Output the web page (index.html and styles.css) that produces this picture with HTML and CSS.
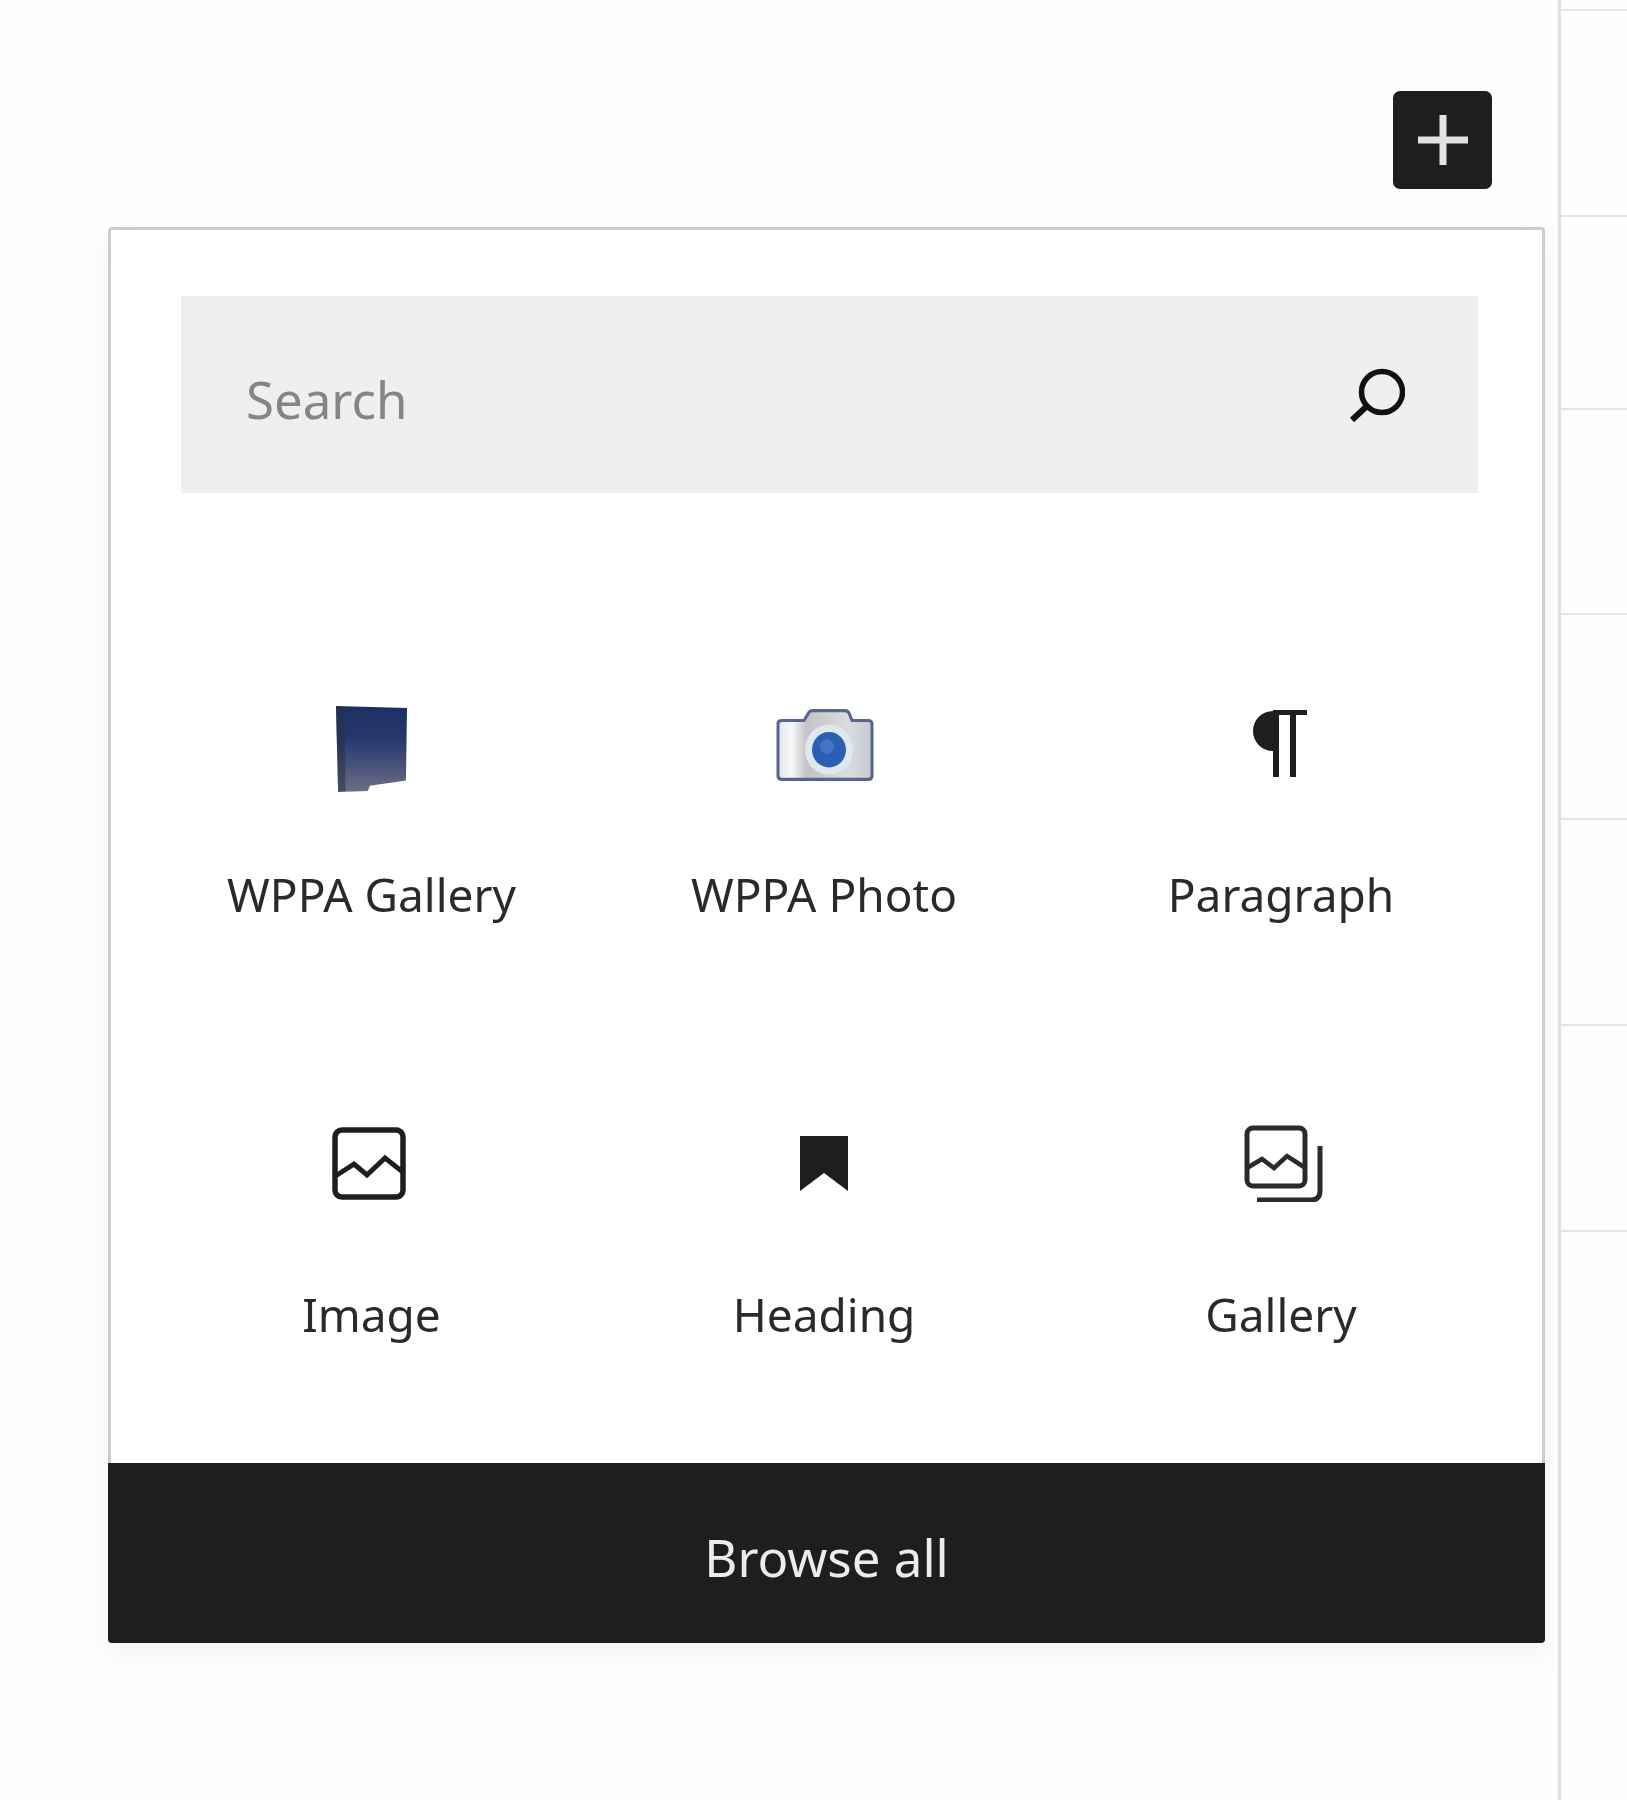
FILE: index.html
```html
<!DOCTYPE html>
<html lang="en">
<head>
    <meta charset="UTF-8">
    <meta name="viewport" content="width=device-width, initial-scale=1.0">
    <title>Block Inserter</title>
    <link rel="stylesheet" href="styles.css">
</head>
<body>
    <div class="page">
        <main class="editor">
            <!-- Add block button -->
            <div class="toolbar">
                <button class="add-button" aria-label="Add block">
                    <svg width="52" height="52" viewBox="0 0 52 52"><path d="M26 1v50M1 26h50" stroke="#e2e2e2" stroke-width="7" fill="none"/></svg>
                </button>
            </div>

            <!-- Inserter popover -->
            <section class="inserter">
                <div class="search">
                    <span class="search-label">Search</span>
                    <svg width="56" height="54" viewBox="0 0 56 54"><circle cx="33" cy="24" r="20.5" stroke="#111" stroke-width="5.5" fill="none"/><path d="M18 38L3 52" stroke="#111" stroke-width="6" fill="none"/></svg>
                </div>

                <div class="block-grid">
                    <div class="block-item">
                        <div class="block-icon">
                            <svg class="icon-book" width="71" height="86" viewBox="0 0 67 83" preserveAspectRatio="none">
                                <defs>
                                    <linearGradient id="book" x1="0" y1="0" x2="0" y2="1">
                                        <stop offset="0" stop-color="#1c2f62"/>
                                        <stop offset=".4" stop-color="#26396f"/>
                                        <stop offset="1" stop-color="#6c6e84"/>
                                    </linearGradient>
                                </defs>
                                <path d="M0 0L67 2L66 72L32 77L30 82L2 83Z" fill="url(#book)"/>
                                <path d="M0 0L8 1L9 82L2 83Z" fill="#2c3045" opacity=".55"/>
                            </svg>
                        </div>
                        <span class="block-label">WPPA Gallery</span>
                    </div>
                    <div class="block-item">
                        <div class="block-icon">
                            <svg class="icon-camera" width="98" height="72" viewBox="0 0 98 69" preserveAspectRatio="none">
                                <defs>
                                    <linearGradient id="body" x1="0" y1="0" x2="1" y2="0">
                                        <stop offset="0" stop-color="#e4e6ec"/>
                                        <stop offset=".15" stop-color="#f8f8fa"/>
                                        <stop offset=".3" stop-color="#c4c4c6"/>
                                        <stop offset=".75" stop-color="#dcdcde"/>
                                        <stop offset="1" stop-color="#c8cad2"/>
                                    </linearGradient>
                                </defs>
                                <path d="M2 14Q2 11 6 11H28L33 3Q34 1.500 37 1.500H69Q72 1.500 73 4L76 11H92Q96 11 96 14V64Q96 67.500 92 67.500H6Q2 67.500 2 64Z" fill="url(#body)" stroke="#5a6490" stroke-width="3"/>
                                <circle cx="53" cy="39" r="24" fill="#dfe8ee"/>
                                <circle cx="53" cy="39" r="17" fill="#2c5fb4"/>
                                <circle cx="51" cy="36" r="7" fill="#3f74c8"/>
                            </svg>
                        </div>
                        <span class="block-label">WPPA Photo</span>
                    </div>
                    <div class="block-item">
                        <div class="block-icon">
                            <svg class="icon-paragraph" width="54" height="67" viewBox="0 0 54 67"><path d="M20 1A20 20 0 0 0 20 41V67H26V5H37V67H43V5H54V0H20Z" fill="#1e1e1e"/></svg>
                        </div>
                        <span class="block-label">Paragraph</span>
                    </div>
                    <div class="block-item">
                        <div class="block-icon">
                            <svg class="icon-image" width="74" height="73" viewBox="0 0 74 73"><rect x="3" y="3" width="68" height="67" rx="7" stroke="#1e1e1e" stroke-width="5.500" fill="none"/><path d="M2 50L22 37L35 48L53 31L72 46" stroke="#1e1e1e" stroke-width="5" fill="none"/></svg>
                        </div>
                        <span class="block-label">Image</span>
                    </div>
                    <div class="block-item">
                        <div class="block-icon">
                            <svg width="48" height="55" viewBox="0 0 48 55"><path d="M0 0H48V55L24 37L0 55Z" fill="#1e1e1e"/></svg>
                        </div>
                        <span class="block-label">Heading</span>
                    </div>
                    <div class="block-item">
                        <div class="block-icon">
                            <svg class="icon-gallery" width="79" height="77" viewBox="0 0 79 77"><rect x="3" y="3" width="58" height="58" rx="6" stroke="#2a2a2a" stroke-width="5" fill="none"/><path d="M3 43L18 34L30 43L43 31L60 42" stroke="#2a2a2a" stroke-width="4.500" fill="none"/><path d="M76 21V66Q76 75 67 75H13" stroke="#2a2a2a" stroke-width="5" fill="none"/></svg>
                        </div>
                        <span class="block-label">Gallery</span>
                    </div>
                </div>

                <button class="browse-all">Browse all</button>
            </section>
        </main>

        <!-- Sidebar rows behind the popover -->
        <aside class="sidebar">
            <div class="sidebar-row first"></div>
            <div class="sidebar-row"></div>
            <div class="sidebar-row short"></div>
            <div class="sidebar-row mid"></div>
            <div class="sidebar-row mid"></div>
            <div class="sidebar-row"></div>
            <div class="sidebar-row"></div>
        </aside>
    </div>
</body>
</html>
```

FILE: styles.css
```css
body {
    margin: 0;
    font-family: "Noto Sans", Arial, sans-serif;
    background: #fefefe;
    color: #1e1e1e;
}

.page {
    display: flex;
    height: 1800px;
    overflow: hidden;
    filter: blur(0.7px);
}

.editor {
    width: 1558px;
    flex-shrink: 0;
}

.toolbar {
    display: flex;
    justify-content: flex-end;
    padding: 91px 66px 38px 0;
}

.add-button {
    width: 99px;
    height: 98px;
    padding: 0;
    border: none;
    border-radius: 7px;
    background: #1e1e1e;
    display: flex;
    align-items: center;
    justify-content: center;
}

.inserter {
    width: 1437px;
    margin-left: 108px;
    box-sizing: border-box;
    border: 3px solid #cdcdcd;
    border-radius: 4px;
    background: #fff;
    box-shadow: 0 12px 30px rgba(0, 0, 0, 0.05);
}

.search {
    display: flex;
    align-items: center;
    justify-content: space-between;
    height: 197px;
    margin: 66px 64px 0 70px;
    padding: 0 73px 0 65px;
    background: #efefef;
}

.search-label {
    padding-top: 8px;
    font-size: 51px;
    color: #858585;
}

.block-grid {
    display: grid;
    grid-template-columns: 453px 452px 462px;
    grid-auto-rows: 420px;
    margin: 130px 0 0 34px;
}

.block-item {
    display: flex;
    flex-direction: column;
    align-items: center;
    padding-top: 66px;
}

.block-icon {
    height: 108px;
    display: flex;
    align-items: center;
    justify-content: center;
}

.icon-book {
    margin-top: 12px;
}

.icon-camera {
    margin-top: 3px;
    margin-left: 2px;
}

.icon-paragraph {
    margin-right: 2px;
}

.icon-image {
    margin-right: 5px;
}

.icon-gallery {
    margin-left: 4px;
}

.block-label {
    margin-top: 67px;
    font-size: 46px;
    line-height: 60px;
    color: #2a2a2a;
}

.browse-all {
    display: block;
    width: calc(100% + 6px);
    height: 180px;
    margin: 0 -3px -3px;
    padding: 8px 0 0;
    border: none;
    border-radius: 0 0 4px 4px;
    background: #1e1e1e;
    color: #ececec;
    font-family: inherit;
    font-size: 51px;
}

.sidebar {
    flex: 1;
    border-left: 3px solid #e0e0e0;
}

.sidebar-row {
    height: 204px;
    border-bottom: 2px solid #e4e4e4;
}

.sidebar-row.first {
    height: 9px;
}

.sidebar-row.short {
    height: 191px;
}

.sidebar-row.mid {
    height: 203px;
}
```
